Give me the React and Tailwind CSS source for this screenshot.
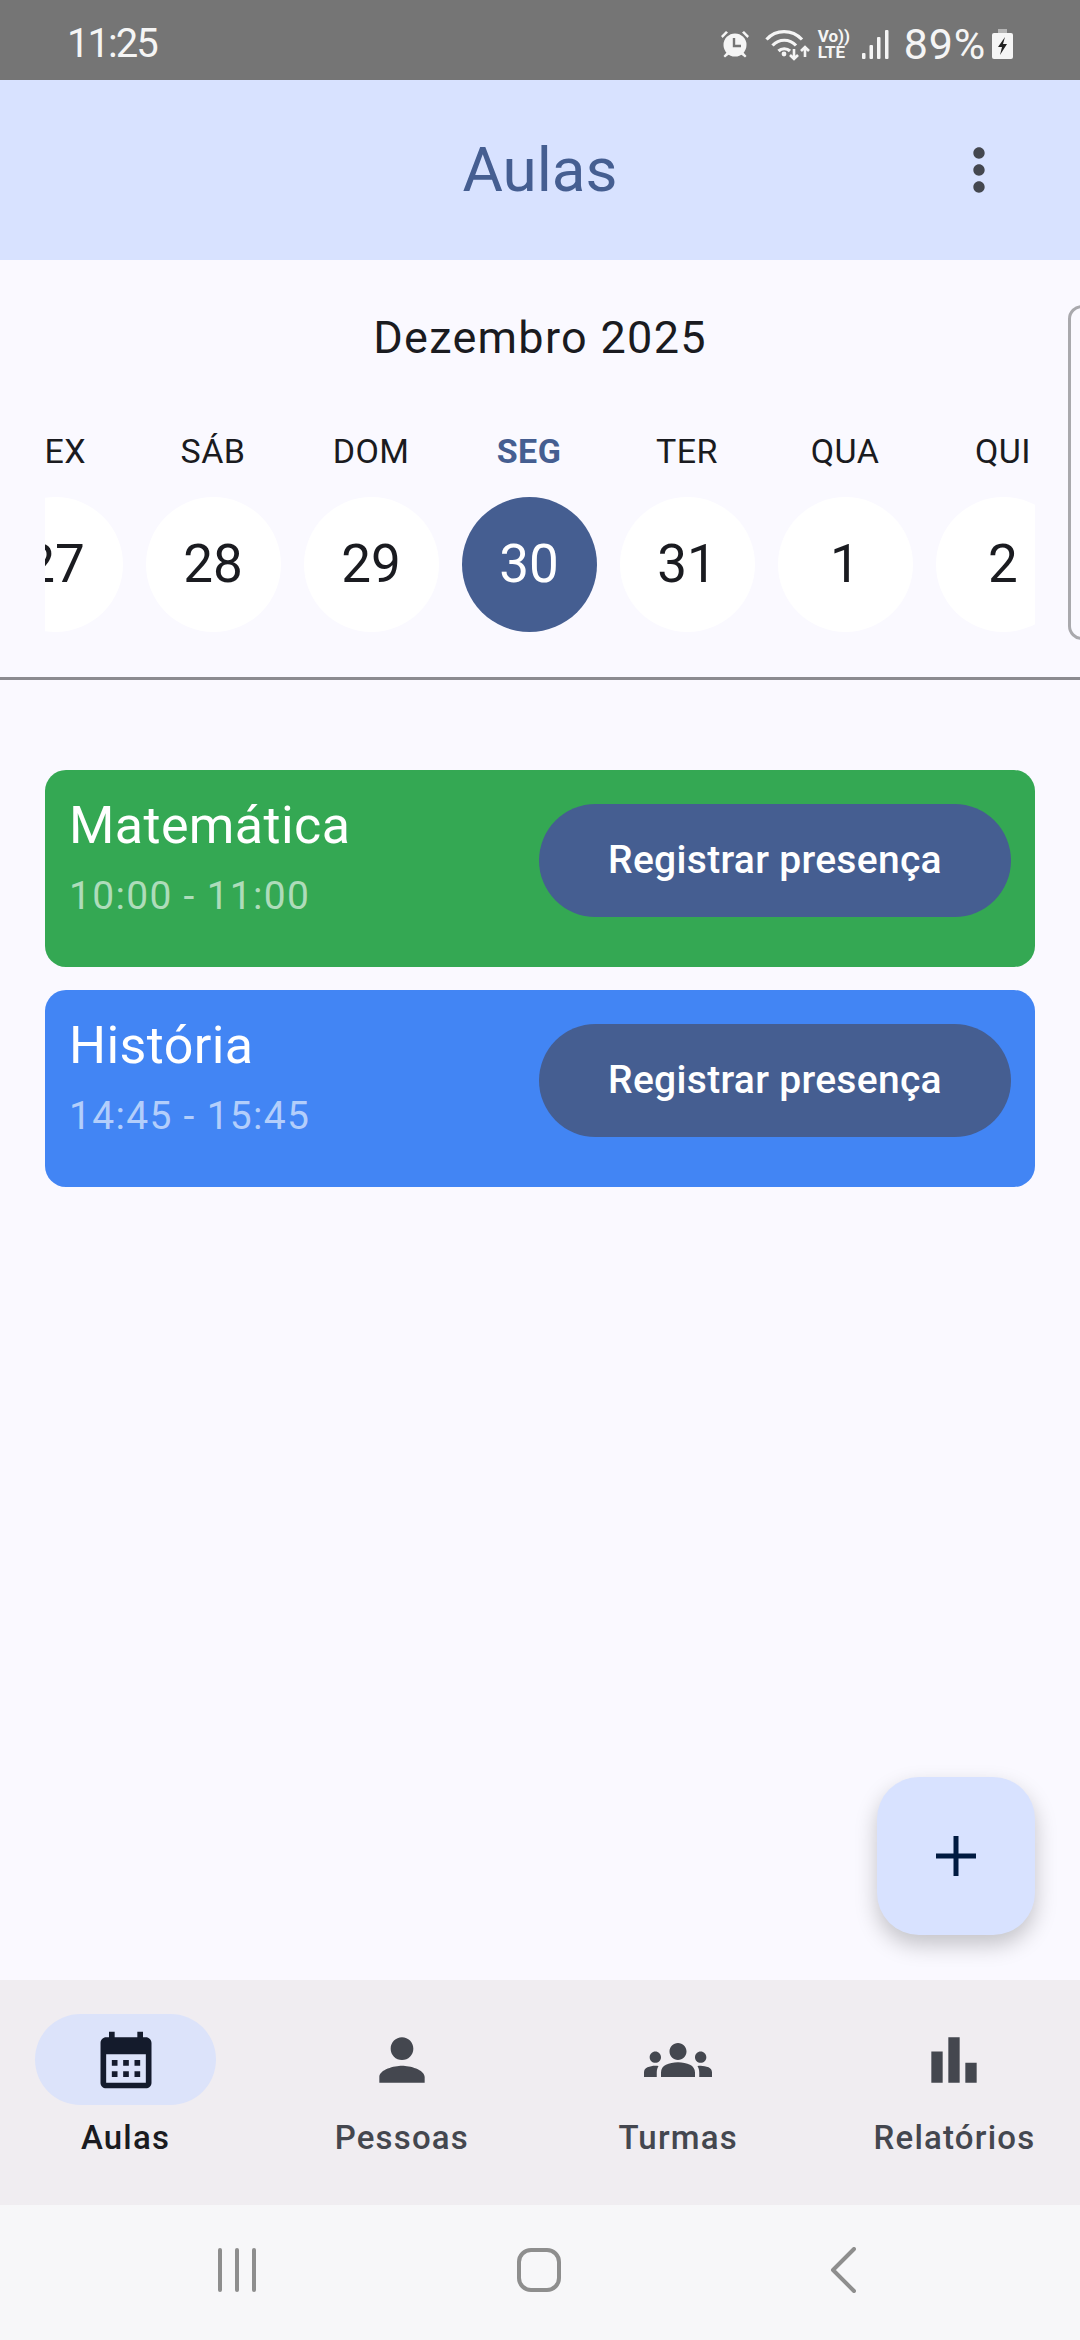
import React from "react";
import { MdGroups, MdMoreVert, MdPerson } from "react-icons/md";

const days = [
  { label: "SEX", day: "27" },
  { label: "SÁB", day: "28" },
  { label: "DOM", day: "29" },
  { label: "SEG", day: "30", selected: true },
  { label: "TER", day: "31" },
  { label: "QUA", day: "1" },
  { label: "QUI", day: "2" },
];

const CalendarIcon = () => (
  <svg viewBox="0 0 24 24" className="w-[68px] h-[68px] fill-[#141b2c]">
    <path d="M19 4h-1V2h-2v2H8V2H6v2H5c-1.11 0-1.99.9-1.99 2L3 20c0 1.1.89 2 2 2h14c1.1 0 2-.9 2-2V6c0-1.1-.9-2-2-2zm0 16H5V10h14v10zM9 14H7v-2h2v2zm4 0h-2v-2h2v2zm4 0h-2v-2h2v2zm-8 4H7v-2h2v2zm4 0h-2v-2h2v2zm4 0h-2v-2h2v2z" />
  </svg>
);

const BarsIcon = () => (
  <svg viewBox="0 0 24 24" className="w-[68px] h-[68px] fill-[#44474f]">
    <path d="M4 9h4v11H4zm12 4h4v7h-4zm-6-9h4v16h-4z" />
  </svg>
);

const StatusIcons = () => (
  <div className="flex items-center">
    {/* Alarm */}
    <svg viewBox="0 0 30 28" className="w-[30px] h-[28px] fill-[#f5f5f5]">
      <circle cx="15" cy="15" r="11.500" />
      <path d="M1 6 6 1l2 1.500L2.600 8zM29 6l-5-5-2 1.500L27.400 8zM7 22l-3.500 4 1.500 1.500L9.500 24zM23 22l3.500 4-1.500 1.500L20.500 24z" />
      <path d="M14 8v8h7" fill="none" stroke="#757575" strokeWidth="2.400" />
    </svg>
    {/* Wifi with arrows */}
    <svg viewBox="0 0 45 34" className="ml-[15px] w-[45px] h-[34px]">
      <g fill="none" stroke="#f5f5f5" strokeWidth="3.200">
        <path d="M1.500 12.500C11 2 27 2 37 12.500" />
        <path d="M7.500 18.500C14 11.500 24.500 11.500 31 18.500" />
        <path d="M13.500 24C16.500 21 22 21 25 24" />
        <path d="M29 22v10M25 28l4 4 4-4" strokeWidth="2.600" />
        <path d="M40 30V20M36 24l4-4 4 4" strokeWidth="2.600" />
      </g>
      <circle cx="19" cy="27" r="2.400" fill="#f5f5f5" />
    </svg>
    {/* VoLTE */}
    <div className="ml-[8px] w-[31px] flex flex-col text-[#f5f5f5] font-bold text-[17px] leading-[16px]">
      <span>Vo))</span>
      <span>LTE</span>
    </div>
    {/* Signal */}
    <svg viewBox="0 0 27 29" className="ml-[13px] w-[27px] h-[29px] fill-[#f5f5f5]">
      <rect x="0" y="23" width="3.500" height="6" rx="1" />
      <rect x="7.500" y="15" width="3.500" height="14" rx="1" />
      <rect x="15" y="7" width="3.500" height="22" rx="1" />
      <rect x="23" y="0" width="3.500" height="29" rx="1" />
    </svg>
    <span className="ml-[15px] text-[43px] leading-none text-[#f5f5f5] tracking-[0.800px]">89%</span>
    {/* Battery */}
    <svg viewBox="0 0 21 30" className="ml-[6px] w-[21px] h-[30px]">
      <path d="M6 0h9v5H6z" fill="#b5b5b5" />
      <path d="M2 4h17a2 2 0 0 1 2 2v22a2 2 0 0 1-2 2H2a2 2 0 0 1-2-2V6a2 2 0 0 1 2-2z" fill="#f5f5f5" />
      <path d="M13 8 6 18h4l-2 8 7-11h-4z" fill="#222222" />
    </svg>
  </div>
);

const ClassCard = ({ title, time, color, timeColor }) => (
  <div className={`h-[197px] rounded-[21px] flex justify-between items-start pl-[24px] pr-[24px] pt-[34px] ${color}`}>
    <div>
      <div className="text-[52px] leading-[44px] text-white tracking-[0.4px]">{title}</div>
      <div className={`mt-[28px] text-[39px] leading-[40px] tracking-[1.300px] ${timeColor}`}>{time}</div>
    </div>
    <button className="w-[472px] h-[113px] rounded-full bg-[#455e91] text-white text-[39px] font-medium tracking-[0.3px]">
      Registrar presença
    </button>
  </div>
);

const NavItem = ({ label, active, children }) => (
  <div className="w-[181px] flex flex-col items-center shrink-0">
    <div className={`w-[181px] h-[91px] rounded-full flex items-center justify-center ${active ? "bg-[#dce3fa]" : ""}`}>
      {children}
    </div>
    <span className={`mt-[11px] text-[33px] leading-[44px] font-medium tracking-[1.200px] whitespace-nowrap ${active ? "text-[#1a1b20]" : "text-[#44474f]"}`}>
      {label}
    </span>
  </div>
);

export default function App() {
  return (
    <div className="relative w-[1080px] h-[2340px] overflow-hidden flex flex-col bg-[#faf9ff] [font-family:Roboto,sans-serif]">
      {/* Status bar */}
      <div className="h-[80px] shrink-0 bg-[#757575] flex items-center justify-between pl-[67px] pr-[67px] pt-[8px]">
        <span className="text-[40px] leading-none text-[#f5f5f5] tracking-[-2px]">11:25</span>
        <StatusIcons />
      </div>

      {/* App bar */}
      <div className="relative h-[180px] shrink-0 bg-[#d8e2ff] flex items-center justify-center">
        <h1 className="text-[62px] leading-none text-[#455e91]">Aulas</h1>
        <MdMoreVert className="absolute right-[67px] top-[56px] w-[68px] h-[68px] text-[#44474f]" />
      </div>

      {/* Calendar */}
      <section className="relative shrink-0 pt-[52px] pb-[45px] border-b-[3px] border-[#8b8b90]">
        <h2 className="text-center text-[45px] leading-[52px] text-[#1a1b20] tracking-[1.300px]">Dezembro 2025</h2>
        <div className="mx-[45px] mt-[67px] overflow-hidden">
          <div className="flex -ml-[69px]">
            {days.map((d) => (
              <div key={d.label} className="w-[158px] shrink-0 flex flex-col items-center">
                <span className={`text-[34px] leading-[40px] tracking-[0.400px] ${d.selected ? "font-bold text-[#455e91]" : "text-[#1a1b20]"}`}>
                  {d.label}
                </span>
                <div className={`mt-[26px] w-[135px] h-[135px] rounded-full flex items-center justify-center text-[53px] ${d.selected ? "bg-[#455e91] text-white" : "bg-white text-[#1a1b20]"}`}>
                  {d.day}
                </div>
              </div>
            ))}
          </div>
        </div>
        {/* Peek of the side panel */}
        <div className="absolute left-[1068px] top-[45px] w-[40px] h-[335px] rounded-l-[14px] border-[3px] border-[#a9a9ad]" />
      </section>

      {/* Classes */}
      <main className="flex-1 px-[45px] pt-[90px] flex flex-col gap-[23px]">
        <ClassCard title="Matemática" time="10:00 - 11:00" color="bg-[#34a853]" timeColor="text-[#aedcba]" />
        <ClassCard title="História" time="14:45 - 15:45" color="bg-[#4285f4]" timeColor="text-[#b3cefb]" />
      </main>

      {/* FAB */}
      <button className="absolute left-[877px] top-[1777px] w-[158px] h-[158px] rounded-[42px] bg-[#d8e2ff] flex items-center justify-center shadow-[0_10px_22px_rgba(0,0,0,0.22)]">
        <svg viewBox="0 0 40 40" className="w-[40px] h-[40px] fill-[#001a41]">
          <path d="M17.500 0h5v17.500H40v5H22.500V40h-5V22.500H0v-5h17.500z" />
        </svg>
      </button>

      {/* Bottom navigation */}
      <nav className="h-[225px] shrink-0 bg-[#f0edf1] flex justify-between px-[35px] pt-[34px]">
        <NavItem label="Aulas" active>
          <CalendarIcon />
        </NavItem>
        <NavItem label="Pessoas">
          <MdPerson className="w-[68px] h-[68px] text-[#44474f]" />
        </NavItem>
        <NavItem label="Turmas">
          <MdGroups className="w-[68px] h-[68px] text-[#44474f]" />
        </NavItem>
        <NavItem label="Relatórios">
          <BarsIcon />
        </NavItem>
      </nav>

      {/* System navigation */}
      <div className="h-[135px] shrink-0 bg-[#f7f7f9] flex items-center pl-[217px] pb-[5px]">
        <svg viewBox="0 0 40 44" className="w-[40px] h-[44px] fill-[#8e8e8e]">
          <rect x="1" y="0" width="4" height="44" rx="2" />
          <rect x="18" y="0" width="4" height="44" rx="2" />
          <rect x="35" y="0" width="4" height="44" rx="2" />
        </svg>
        <div className="ml-[260px] w-[44px] h-[44px] rounded-[14px] border-[4px] border-[#8e8e8e]" />
        <svg viewBox="0 0 26 46" className="ml-[269px] w-[26px] h-[46px]" fill="none" stroke="#8e8e8e" strokeWidth="4" strokeLinecap="round" strokeLinejoin="round">
          <path d="M24 2 3 23l21 21" />
        </svg>
      </div>
    </div>
  );
}
